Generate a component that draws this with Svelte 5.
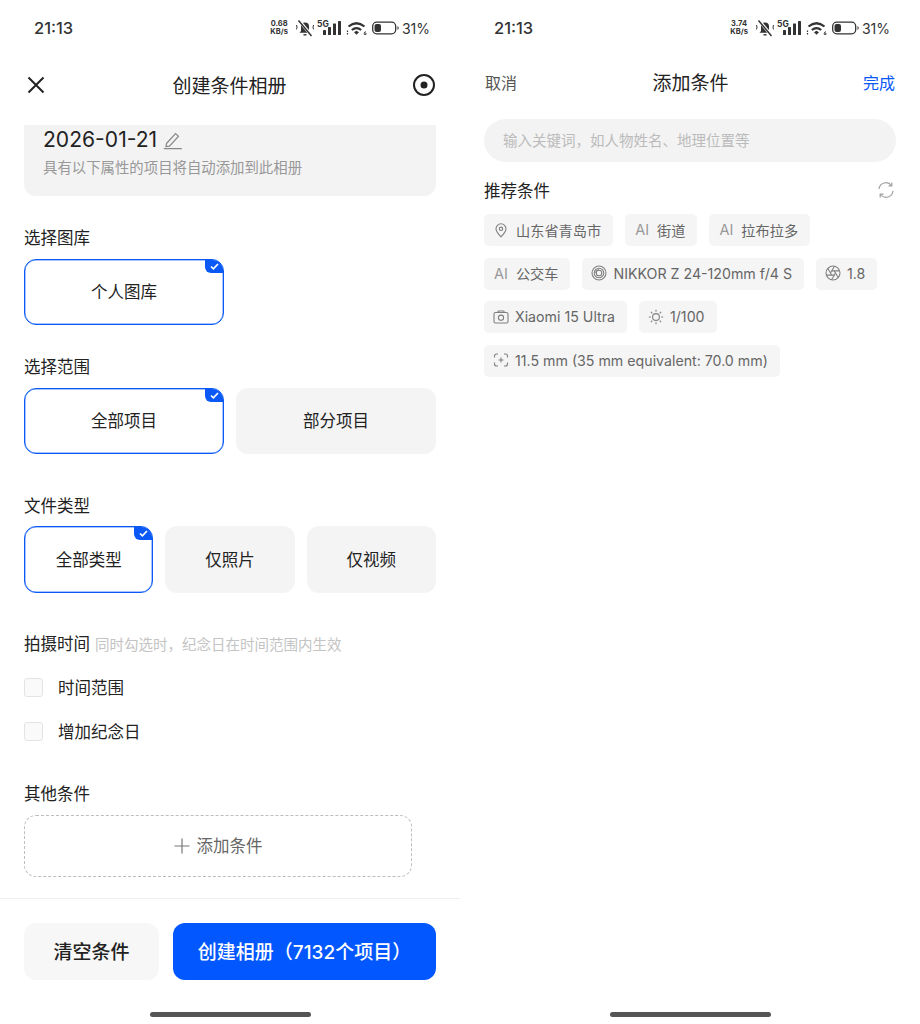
<script lang="ts">
  const chipsRight = [
    { icon: "pin", text: "山东省青岛市" },
    { ai: true, text: "街道" },
    { ai: true, text: "拉布拉多" },
    { ai: true, text: "公交车" },
    { icon: "lens", text: "NIKKOR Z 24-120mm f/4 S" },
    { icon: "aperture", text: "1.8" },
    { icon: "camera", text: "Xiaomi 15 Ultra" },
    { icon: "sun", text: "1/100" },
    { icon: "focal", text: "11.5 mm (35 mm equivalent: 70.0 mm)" },
  ];
  const blades = [0, 60, 120, 180, 240, 300];
</script>

{#snippet statusBar(speed: string)}
  <div class="status">
    <span class="time">21:13</span>
    <div class="indicators">
      <span class="speed"><b>{speed}</b><b>KB/s</b></span>
      <svg class="bell" width="20" height="18" viewBox="0 0 20 18" fill="none">
        <path d="M6 12V7.500a4 4 0 0 1 8 0V12l1.500 1.800h-11z" fill="#333" />
        <path d="M8.500 15.800h3" stroke="#333" stroke-width="1.400" />
        <path d="M4 1.500l12.500 15" stroke="#fff" stroke-width="3" />
        <path d="M3.500 1.500l13 15.500" stroke="#333" stroke-width="1.500" />
        <path d="M1.500 6q1 2.200 0 4.400M18.500 6q-1 2.200 0 4.400" stroke="#333" stroke-width="1" />
      </svg>
      <span class="net">5G</span>
      <svg class="bars" width="18" height="16" viewBox="0 0 18 16" fill="#333">
        <rect x="0" y="10" width="3" height="5" rx=".5" />
        <rect x="5" y="7" width="3" height="8" rx=".5" />
        <rect x="10" y="3.500" width="3" height="11.500" rx=".5" />
        <rect x="15" y="1" width="3" height="14" rx=".5" />
      </svg>
      <svg class="wifi" width="21" height="16" viewBox="0 0 21 16" fill="none" stroke="#333" stroke-width="2.200">
        <path d="M2.500 6.500q8-6.500 16 0" />
        <path d="M5.800 10q4.700-3.800 9.400 0" />
        <path d="M8 12.300l2.500-1.600 2.500 1.600-2.500 2.500z" fill="#333" stroke="none" />
        <path d="M1.500 10.500v1.500M1.500 13v1.500" stroke-width="1.200" />
        <path d="M19.800 11.500q-1.600.5-1.600 2v1h1.800v-1.500h-1.800" stroke-width=".8" />
      </svg>
      <svg class="battery" width="27" height="14" viewBox="0 0 27 14" fill="none">
        <rect x=".7" y="1.200" width="23" height="11.600" rx="4" stroke="#333" stroke-width="1.300" />
        <rect x="2.500" y="3" width="6.500" height="8" rx="2" fill="#333" />
        <path d="M25.500 5v4q1.200-.5 1.200-2t-1.200-2z" fill="#333" />
      </svg>
      <span class="pct">31%</span>
    </div>
  </div>
{/snippet}

{#snippet check()}
  <span class="tick">
    <svg width="9" height="7" viewBox="0 0 9 7" fill="none" stroke="#fff" stroke-width="1.700">
      <path d="M1 3.500l2.400 2.300L8 1" />
    </svg>
  </span>
{/snippet}

{#snippet chipIcon(name: string)}
  <svg class="chip-icon {name}" width="16" height="16" viewBox="0 0 16 16" fill="none" stroke="#808080" stroke-width="1.100">
    {#if name === "pin"}
      <path d="M8 14.800c-3-3-5-5.300-5-8a5 5 0 0 1 10 0c0 2.700-2 5-5 8z" />
      <circle cx="8" cy="6.800" r="1.700" />
    {:else if name === "lens"}
      <circle cx="8" cy="8" r="7" />
      <circle cx="8" cy="8" r="4.800" />
      <path d="M4.800 8a3.200 3.200 0 0 1 3.200-3.200" />
      <circle cx="8" cy="8" r="2.800" />
    {:else if name === "aperture"}
      <circle cx="8" cy="8" r="7" />
      {#each blades as angle}
        <path d="M5.500 8L9.450 1.150" transform={`rotate(${angle} 8 8)`} />
      {/each}
    {:else if name === "camera"}
      <rect x="1" y="3.500" width="14" height="10.500" rx="1.500" />
      <path d="M4.500 3.500l.8-1.500h5.400l.8 1.500" />
      <circle cx="8" cy="8.700" r="2.600" />
    {:else if name === "sun"}
      <circle cx="8" cy="8" r="3.400" />
      <path d="M8 .8v2M8 13.200v2M.8 8h2M13.200 8h2M2.900 2.900l1.400 1.400M11.700 11.700l1.400 1.400M2.900 13.100l1.400-1.400M11.700 4.300l1.400-1.400" />
    {:else if name === "focal"}
      <path d="M1.500 5.500V4a2 2 0 0 1 2-2H5M11 2h1.500a2 2 0 0 1 2 2v1.500M1.500 10.500V12a2 2 0 0 0 2 2H5M11 14h1.500a2 2 0 0 0 2-2v-1.500" />
      <path d="M8 5.500v5M5.500 8h5" />
    {/if}
  </svg>
{/snippet}

<div class="screen">
  <section class="phone">
    {@render statusBar("0.68")}
    <header class="nav">
      <svg width="20" height="20" viewBox="0 0 20 20" fill="none" stroke="#222" stroke-width="2">
        <path d="M2.500 2.500l15 15M17.500 2.500l-15 15" />
      </svg>
      <h1>创建条件相册</h1>
      <svg width="24" height="24" viewBox="0 0 24 24" fill="none" stroke="#222" stroke-width="2">
        <circle cx="12" cy="12" r="10" />
        <circle cx="12" cy="12" r="3.500" fill="#222" stroke="none" />
      </svg>
    </header>

    <div class="name-card">
      <div class="name-row">
        <span class="album-name">2026-01-21</span>
        <svg width="20" height="20" viewBox="0 0 20 20" fill="none" stroke="#888" stroke-width="1.200">
          <path d="M3.500 13.500L12.500 3.500l3 2.700-9 10-3.500.3zM.8 18.700h18" />
        </svg>
      </div>
      <p class="hint">具有以下属性的项目将自动添加到此相册</p>
    </div>

    <h2 class="label first">选择图库</h2>
    <div class="options">
      <button class="option half active">个人图库{@render check()}</button>
    </div>

    <h2 class="label range">选择范围</h2>
    <div class="options">
      <button class="option half active">全部项目{@render check()}</button>
      <button class="option half">部分项目</button>
    </div>

    <h2 class="label type">文件类型</h2>
    <div class="options tight">
      <button class="option third active">全部类型{@render check()}</button>
      <button class="option third">仅照片</button>
      <button class="option third">仅视频</button>
    </div>

    <div class="label time-label">
      <h2>拍摄时间</h2>
      <span>同时勾选时，纪念日在时间范围内生效</span>
    </div>
    <label class="checkrow"><i></i>时间范围</label>
    <label class="checkrow second"><i></i>增加纪念日</label>

    <h2 class="label other">其他条件</h2>
    <button class="add">
      <svg width="16" height="16" viewBox="0 0 16 16" stroke="#777" stroke-width="1.200"><path d="M8 .5v15M.5 8h15" /></svg>
      添加条件
    </button>

    <footer class="actions">
      <button class="clear">清空条件</button>
      <button class="create">创建相册（7132个项目）</button>
    </footer>
    <div class="home"></div>
  </section>

  <section class="phone">
    {@render statusBar("3.74")}
    <header class="nav add-nav">
      <span class="cancel">取消</span>
      <h1>添加条件</h1>
      <span class="done">完成</span>
    </header>
    <div class="search">输入关键词，如人物姓名、地理位置等</div>
    <div class="rec-head">
      <h2>推荐条件</h2>
      <svg width="18" height="18" viewBox="0 0 18 18" fill="none" stroke="#a0a0a0" stroke-width="1.200">
        <path d="M2 8a7 7 0 0 1 12.500-3.500M16 10a7 7 0 0 1-12.500 3.500" />
        <path d="M14.800 1.500v3.300h-3.300M3.200 16.500v-3.300h3.300" />
      </svg>
    </div>
    <div class="chips">
      {#each chipsRight as chip}
        <span class="chip" class:ai={chip.ai}>
          {#if chip.ai}<em>AI</em>{:else if chip.icon}{@render chipIcon(chip.icon)}{/if}
          {chip.text}
        </span>
      {/each}
    </div>
    <div class="spring"></div>
    <div class="home"></div>
  </section>
</div>

<style>
  :global(body) {
    background: #fff;
  }
  .screen {
    display: flex;
    width: 920px;
    height: 1024px;
    font-family: Inter, "Noto Sans CJK SC", sans-serif;
    color: #222;
    overflow: hidden;
  }
  .phone {
    display: flex;
    flex-direction: column;
    width: 460px;
    height: 1024px;
  }
  h1,
  h2,
  p {
    margin: 0;
    font-weight: 400;
  }
  button {
    font: inherit;
    color: inherit;
    border: 0;
    padding: 0;
  }

  .status {
    display: flex;
    justify-content: space-between;
    align-items: center;
    height: 56px;
    padding: 0 30px 0 34px;
    flex: none;
    color: #333;
  }
  .time {
    font-size: 16.500px;
    font-weight: 500;
  }
  .indicators {
    display: flex;
    align-items: center;
    position: relative;
  }
  .speed {
    display: flex;
    flex-direction: column;
    align-items: center;
    width: 22px;
    margin-right: 1px;
    font-size: 7.500px;
    line-height: 8px;
  }
  .bell {
    margin-left: 4px;
  }
  .net {
    font-size: 8.500px;
    font-weight: 700;
    line-height: 9px;
    align-self: flex-start;
    margin: 1px -6px 0 2px;
    position: relative;
    z-index: 1;
  }
  .wifi {
    margin-left: 5px;
  }
  .battery {
    margin-left: 5px;
  }
  .pct {
    margin-left: 3px;
    font-size: 14px;
  }

  .nav {
    display: flex;
    justify-content: space-between;
    align-items: center;
    height: 58px;
    padding: 0 24px 0 26px;
    margin-bottom: 11px;
    flex: none;
  }
  .nav h1 {
    font-size: 19px;
    padding: 0 0 2px 1px;
  }
  .add-nav {
    height: 52px;
    margin-bottom: 11px;
    padding: 0 25px 0 25px;
  }
  .cancel {
    font-size: 16px;
    color: #555;
  }
  .done {
    font-size: 16px;
    color: #0a59f7;
  }

  .name-card {
    margin: 0 24px;
    height: 71px;
    flex: none;
    padding: 0 19px;
    background: #f3f3f3;
    border-radius: 0 0 12px 12px;
    box-sizing: border-box;
  }
  .name-row {
    display: flex;
    align-items: center;
    gap: 6px;
    height: 30px;
  }
  .album-name {
    font-size: 21.100px;
    line-height: 28px;
  }
  .hint {
    margin-top: 3px;
    font-size: 14.400px;
    line-height: 20px;
    color: #989898;
  }

  .label {
    font-size: 16.500px;
    line-height: 22px;
    margin-left: 24px;
    flex: none;
  }
  .label.first {
    margin-top: 31px;
  }
  .label.range {
    margin-top: 31px;
  }
  .label.type {
    margin-top: 41px;
  }
  .options {
    display: flex;
    gap: 12px;
    margin: 10px 24px 0;
    flex: none;
  }
  .options.tight {
    margin-top: 9px;
  }
  .option {
    position: relative;
    height: 66px;
    padding-bottom: 2px;
    box-sizing: border-box;
    background: #f4f4f4;
    border-radius: 12px;
    font-size: 16.500px;
    overflow: hidden;
  }
  .option.half {
    width: 200px;
  }
  .option.third {
    width: calc((100% - 24px) / 3);
    height: 67px;
    flex: none;
  }
  .option.active {
    background: #fff;
    border: 1px solid #0a59f7;
    box-shadow: inset 0 0 0 0.5px rgba(10, 89, 247, 0.7);
  }
  .tick {
    position: absolute;
    top: 0;
    right: 0;
    display: flex;
    align-items: center;
    justify-content: center;
    width: 18px;
    height: 13px;
    background: #0a59f7;
    border-radius: 0 0 0 6px;
  }

  .time-label {
    display: flex;
    align-items: baseline;
    gap: 5px;
    margin-top: 40px;
  }
  .time-label h2 {
    font-size: 16.500px;
  }
  .time-label span {
    font-size: 14.500px;
    color: #c4c4c4;
  }
  .checkrow {
    display: flex;
    align-items: center;
    gap: 15px;
    margin: 20px 24px 0;
    height: 22px;
    font-size: 16.500px;
    flex: none;
  }
  .checkrow.second {
    margin-top: 22px;
  }
  .checkrow i {
    width: 17px;
    height: 17px;
    border: 1px solid #e4e4e4;
    background: #fafafa;
    border-radius: 3px;
  }
  .label.other {
    margin-top: 41px;
  }
  .add {
    display: flex;
    align-items: center;
    justify-content: center;
    gap: 7px;
    width: 388px;
    height: 62px;
    margin: 10px 0 0 24px;
    padding-bottom: 2px;
    box-sizing: border-box;
    background: #fff;
    border: 1px dashed #bdbdbd;
    border-radius: 12px;
    font-size: 16.500px;
    color: #666;
    flex: none;
  }
  .add svg {
    margin-top: 2px;
  }

  .actions {
    display: flex;
    gap: 14px;
    margin-top: 21px;
    padding: 24px 24px 0;
    border-top: 1px solid #eee;
    flex: none;
  }
  .actions button {
    height: 57px;
    padding-bottom: 3px;
    border-radius: 12px;
    font-size: 19px;
    font-weight: 500;
  }
  .clear {
    width: 135px;
    background: #f7f7f7;
  }
  .actions .create {
    flex: 1;
    background: #0257ff;
    color: #fff;
  }
  .home {
    width: 161px;
    height: 5px;
    margin: auto auto 7px;
    background: #555;
    border-radius: 3px;
    flex: none;
  }

  .search {
    display: flex;
    align-items: center;
    height: 43px;
    margin: 0 24px;
    padding: 0 19px 2px;
    box-sizing: border-box;
    background: #f3f3f3;
    border-radius: 22px;
    font-size: 14.500px;
    color: #bbb;
    flex: none;
  }
  .rec-head {
    display: flex;
    justify-content: space-between;
    align-items: center;
    margin: 17px 25px 0 24px;
    height: 22px;
    flex: none;
  }
  .rec-head h2 {
    font-size: 16.500px;
  }
  .chips {
    display: flex;
    flex-wrap: wrap;
    gap: 11.500px 12px;
    margin: 13px 24px 0;
  }
  .chip {
    display: flex;
    align-items: center;
    gap: 6px;
    height: 32px;
    padding: 0 12px 1px 9px;
    box-sizing: border-box;
    background: #f5f5f5;
    border-radius: 5px;
    font-size: 14.200px;
    color: #666;
  }
  .chip.ai {
    gap: 8px;
    padding-left: 10px;
  }
  .chip em {
    font-style: normal;
    font-size: 14.500px;
    color: #999;
  }
  .chip-icon {
    flex: none;
  }
  .chip-icon.pin {
    margin-right: 1px;
  }
  .spring {
    flex: 1;
  }
</style>
